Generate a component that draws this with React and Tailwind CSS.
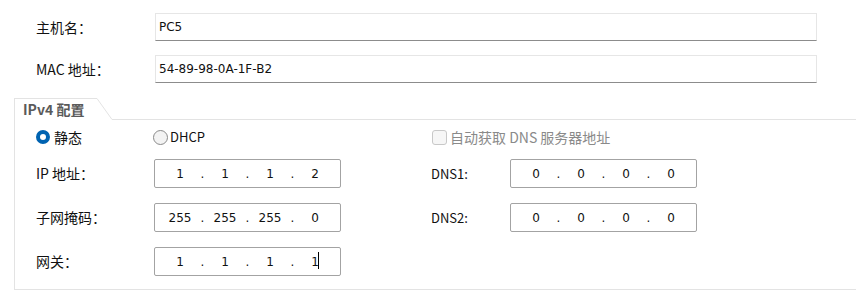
import React from "react";

const cjk = { fontFamily: '"Noto Sans CJK SC", "Noto Sans", sans-serif' };
const num = { fontFamily: '"DejaVu Sans", "Liberation Sans", sans-serif' };

function TextRow({ label, value, className = "" }) {
  return (
    <div className={`flex items-center h-[28px] ${className}`}>
      <div className="w-[155px] pl-[36px] text-[14px] text-[#111]">{label}</div>
      <div
        className="w-[662px] h-[28px] flex items-center pl-[3px] border border-[#e6e6e6] border-b-[#8c8c8c] text-[12px] text-[#111]"
        style={num}
      >
        {value}
      </div>
    </div>
  );
}

function IpBox({ parts, cursor }) {
  return (
    <div className="w-[187px] h-[29px] flex items-center pl-[5px] border border-[#a3a3a3] rounded-[2px] bg-white text-[12px] text-[#111]" style={num}>
      {parts.map((p, i) => (
        <React.Fragment key={i}>
          <div className="w-[40px] text-center relative">
            {p}
            {cursor && i === 3 && (
              <span className="absolute left-[23px] top-[-1px] w-px h-[17px] bg-black" />
            )}
          </div>
          {i < 3 && <div className="w-[5px] text-center">.</div>}
        </React.Fragment>
      ))}
    </div>
  );
}

function Label({ children, w }) {
  return <div className={`${w} text-[14px] text-[#111]`}>{children}</div>;
}

export default function App() {
  return (
    <div className="w-[856px] h-[290px] bg-white overflow-hidden pt-[13px]" style={cjk}>
      <TextRow label="主机名：" value="PC5" />
      <TextRow label="MAC 地址：" value="54-89-98-0A-1F-B2" className="mt-[14px]" />

      {/* tab header */}
      <div className="ml-[14px] mt-[15px] flex h-[22px]">
        <div className="w-[83px] border-l border-t border-[#e3e3e3] pl-[8px] text-[14px] font-bold text-[#5a5a5a] leading-[21px] whitespace-nowrap">
          IPv4 配置
        </div>
        <svg width="15" height="22" className="block">
          <line x1="0" y1="0.5" x2="15" y2="21.5" stroke="#e3e3e3" strokeWidth="1" />
        </svg>
        <div className="flex-1 border-b border-[#e3e3e3]" />
      </div>

      <div className="ml-[14px] h-[170px] border-l border-b border-[#e3e3e3] pl-[21px] pt-[9px]">
        <div className="flex items-center h-[16px]">
          <div className="w-[117px] flex items-center gap-[4px]">
            <span className="w-[14px] h-[14px] rounded-full border-[4px] border-[#0063b1] bg-white" />
            <span className="text-[14px] text-[#111]">静态</span>
          </div>
          <div className="w-[279px] flex items-center gap-[2px]">
            <span className="w-[15px] h-[15px] rounded-full border border-[#8a8a8a] bg-[#f3f3f3]" />
            <span className="text-[13px] text-[#111]">DHCP</span>
          </div>
          <div className="flex items-center gap-[3px]">
            <span className="w-[15px] h-[15px] rounded-[3px] border border-[#c8c8c8] bg-[#f6f6f6]" />
            <span className="text-[14px] text-[#8a8a8a]">自动获取 DNS 服务器地址</span>
          </div>
        </div>

        <div className="flex items-center mt-[14px]">
          <Label w="w-[118px]">IP 地址：</Label>
          <IpBox parts={["1", "1", "1", "2"]} />
          <Label w="w-[169px] pl-[90px] !text-[13px]">DNS1:</Label>
          <IpBox parts={["0", "0", "0", "0"]} />
        </div>

        <div className="flex items-center mt-[15px]">
          <Label w="w-[118px]">子网掩码：</Label>
          <IpBox parts={["255", "255", "255", "0"]} />
          <Label w="w-[169px] pl-[90px] !text-[13px]">DNS2:</Label>
          <IpBox parts={["0", "0", "0", "0"]} />
        </div>

        <div className="flex items-center mt-[15px]">
          <Label w="w-[118px]">网关：</Label>
          <IpBox parts={["1", "1", "1", "1"]} cursor />
        </div>
      </div>
    </div>
  );
}
